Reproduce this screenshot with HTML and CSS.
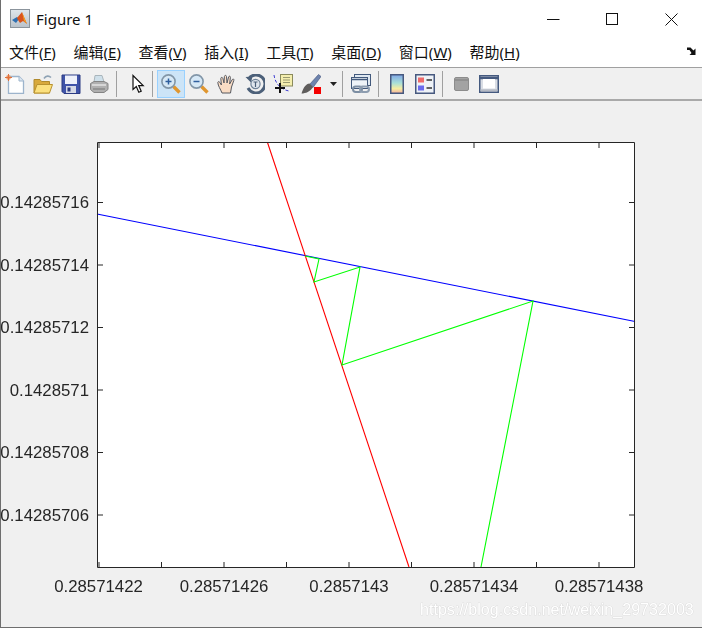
FILE: index.html
```html
<!DOCTYPE html>
<html lang="en">
<head>
    <meta charset="UTF-8">
    <meta name="viewport" content="width=device-width, initial-scale=1.0">
    <title>Figure 1</title>
    <link rel="stylesheet" href="styles.css">
</head>
<body>
    <div class="window">
        <div class="titlebar">
            <svg class="app-icon" width="20" height="20" viewBox="0 0 20 20">
                <defs>
                    <linearGradient id="frame" x1="0" y1="0" x2="0" y2="1">
                        <stop offset="0" stop-color="#dfe6ec"/>
                        <stop offset="1" stop-color="#b9c2ca"/>
                    </linearGradient>
                </defs>
                <rect x="0.5" y="0.5" width="19" height="18" fill="url(#frame)" stroke="#8b949c"/>
                <path d="M2 11 L7 8 L9 10 L6 14 Z" fill="#2f6fb0"/>
                <path d="M7 9 L12 3 L14 8 L17 15 L13 12 L10 14 L8 11 Z" fill="#d9541e"/>
                <path d="M12 3 L14 8 L17 15 L14 12 Z" fill="#f2a01f"/>
            </svg>
            <span class="title">Figure 1</span>
            <div class="window-controls">
                <svg width="13" height="13" viewBox="0 0 13 13"><path d="M0 6.5H12.5" stroke="#111" fill="none"/></svg>
                <svg width="13" height="13" viewBox="0 0 13 13"><rect x="0.5" y="0.5" width="11" height="11" stroke="#111" fill="none"/></svg>
                <svg width="13" height="13" viewBox="0 0 13 13"><path d="M0.5 0.5L12.5 12.5M12.5 0.5L0.5 12.5" stroke="#111" fill="none"/></svg>
            </div>
        </div>

        <div class="menubar">
            <span class="menu-item">文件(<u>F</u>)</span>
            <span class="menu-item">编辑(<u>E</u>)</span>
            <span class="menu-item">查看(<u>V</u>)</span>
            <span class="menu-item">插入(<u>I</u>)</span>
            <span class="menu-item">工具(<u>T</u>)</span>
            <span class="menu-item">桌面(<u>D</u>)</span>
            <span class="menu-item">窗口(<u>W</u>)</span>
            <span class="menu-item">帮助(<u>H</u>)</span>
            <svg class="dock-arrow" width="10" height="9" viewBox="0 0 10 9"><path d="M0 0.5H3.5L6.5 3.5L8.5 1.5V8H2.5L4.5 6L2.5 3H0Z" fill="#111"/></svg>
        </div>

        <div class="toolbar">
            <span class="tool"><svg width="20" height="20" viewBox="0 0 20 20">
                <path d="M3.5 2.5H14L18.5 7V19.5H3.5Z" fill="#fff" stroke="#9db4cc" stroke-width="1.3"/>
                <path d="M14 2.5V7H18.5" fill="#dce6f0" stroke="#9db4cc"/>
                <circle cx="3.5" cy="3.5" r="2.4" fill="#ee9a6a"/>
                <path d="M3.5 0V7M0 3.5H7" stroke="#e0703a"/>
            </svg></span>
            <span class="tool"><svg width="20" height="20" viewBox="0 0 20 20">
                <path d="M11 4.5C13 1.5 16 1.5 18 3.5" fill="none" stroke="#8fa3b5" stroke-width="1.6"/>
                <path d="M1 5.5H7L8.5 7.5H16.5V19H1Z" fill="#d8a93c" stroke="#b08a2d"/>
                <path d="M1 19L4 10.5H19.5L16.5 19Z" fill="#fbe07e" stroke="#b9922f"/>
            </svg></span>
            <span class="tool"><svg width="20" height="20" viewBox="0 0 20 20">
                <path d="M1 1H19V19.5H3L1 17.5Z" fill="#3f53a8" stroke="#2b3a82"/>
                <rect x="4" y="1.5" width="12" height="8.5" fill="#eef1fa"/>
                <rect x="5" y="12" width="10" height="7" fill="#d5d9e6"/>
                <rect x="6.5" y="13.5" width="3" height="4" fill="#2b3a82"/>
            </svg></span>
            <span class="tool"><svg width="20" height="20" viewBox="0 0 20 20">
                <path d="M6 1.5H13L15 8H5Z" fill="#cfe0ea" stroke="#a9b5bb"/>
                <path d="M1.5 9.5L5 7.5H15L19 9.5V15.5L15 18.5H5L1.5 15.5Z" fill="#b0b0b0" stroke="#858585"/>
                <path d="M3 11H17" stroke="#e4e4e4" stroke-width="1.5"/>
                <path d="M4 15H16" stroke="#777"/>
            </svg></span>
            <span class="sep sep-wide"></span>
            <span class="tool"><svg width="20" height="20" viewBox="0 0 20 20">
                <path d="M6 1.5V15.5L9.3 12.6L11.8 18.3L14.2 17.2L11.7 11.6H16.2Z" fill="#fff" stroke="#111" stroke-width="1.2"/>
            </svg></span>
            <span class="sep sep-tight"></span>
            <span class="tool tool-active"><svg width="20" height="20" viewBox="0 0 20 20">
                <path d="M12.5 12.5L18.5 18.5" stroke="#e0962f" stroke-width="3.4"/>
                <circle cx="7.5" cy="7.5" r="6.6" fill="#d6e8f6" stroke="#8296a8" stroke-width="1.6"/>
                <path d="M4.5 7.5H10.5M7.5 4.5V10.5" stroke="#2f5f9e" stroke-width="1.5"/>
            </svg></span>
            <span class="tool"><svg width="20" height="20" viewBox="0 0 20 20">
                <path d="M12.5 12.5L18.5 18.5" stroke="#e0962f" stroke-width="3.4"/>
                <circle cx="7.5" cy="7.5" r="6.6" fill="#d6e8f6" stroke="#8296a8" stroke-width="1.6"/>
                <path d="M4.5 7.5H10.5" stroke="#2f5f9e" stroke-width="1.5"/>
            </svg></span>
            <span class="tool"><svg width="20" height="20" viewBox="0 0 20 20">
                <path d="M5 19C3.5 15 1 12 0.8 8.5C1 7 2.5 7.5 3.2 9L4.4 11L3.8 4.5C3.9 3 5.5 3 5.9 4.5L7 9L7.4 2.5C7.7 1 9.3 1 9.5 2.5L10 9L11.6 3C12 1.7 13.6 2 13.4 3.5L12.6 10L15.3 5.5C16.2 4.5 17.3 5.2 16.8 6.5L14.5 13C14 15 14 17 13.5 19Z" fill="#f9dcc4" stroke="#56585f" stroke-width="1"/>
            </svg></span>
            <span class="tool"><svg width="20" height="20" viewBox="0 0 20 20">
                <path d="M3.5 5A9 9 0 1 1 3 14" fill="none" stroke="#4c6079" stroke-width="3"/>
                <path d="M0.5 3L7.5 2.5L6 8.5Z" fill="#4c6079"/>
                <circle cx="10.5" cy="10" r="4.6" fill="#dfe6ee" stroke="#6f8298" stroke-width="1.2"/>
                <path d="M8.5 8H12.5M10.5 8V13" stroke="#4c6079" stroke-width="1.2"/>
            </svg></span>
            <span class="tool"><svg width="20" height="20" viewBox="0 0 20 20">
                <path d="M1 1C2 8 6 15 16 17" fill="none" stroke="#3a3ad0" stroke-dasharray="3 2"/>
                <rect x="7.5" y="0.5" width="12" height="11.5" fill="#f4eeae" stroke="#8a8a5c"/>
                <path d="M10 3.5H17M10 6H17M10 8.5H17" stroke="#9a9a70"/>
                <path d="M7 9V19M2 14H12" stroke="#111" stroke-width="2"/>
            </svg></span>
            <span class="tool"><svg width="20" height="20" viewBox="0 0 20 20">
                <path d="M8.5 10.5L17.5 0.5L20 2.5L12 13.5Z" fill="#6d83ad" stroke="#3f4f78" stroke-width="0.6"/>
                <path d="M8.5 9.5C5 10 2.5 13 0.5 19.5C4.5 19.5 9.5 17.5 12 13Z" fill="#5f5d5c"/>
                <rect x="13" y="13" width="7" height="7" fill="#f40000"/>
            </svg></span>
            <span class="tool-caret"><svg width="7" height="4" viewBox="0 0 7 4"><path d="M0 0H7L3.5 4Z" fill="#222"/></svg></span>
            <span class="sep sep-tight"></span>
            <span class="tool"><svg width="20" height="20" viewBox="0 0 20 20">
                <rect x="3.5" y="0.5" width="16" height="11" fill="#dfe8f1" stroke="#42597c"/>
                <rect x="0.5" y="3.5" width="16" height="11" fill="#eef3f8" stroke="#42597c"/>
                <path d="M0.5 5.5H16.5" stroke="#42597c" stroke-width="1.5"/>
                <rect x="2" y="12.5" width="9" height="5.5" rx="2.7" fill="none" stroke="#7c8ea3" stroke-width="2"/>
                <rect x="9" y="12.5" width="9" height="5.5" rx="2.7" fill="none" stroke="#8d9db0" stroke-width="2"/>
            </svg></span>
            <span class="sep"></span>
            <span class="tool"><svg width="14" height="20" viewBox="0 0 14 20">
                <defs>
                    <linearGradient id="cbar" x1="0" y1="0" x2="0" y2="1">
                        <stop offset="0" stop-color="#7fa6e6"/>
                        <stop offset="0.45" stop-color="#a8e0d8"/>
                        <stop offset="0.75" stop-color="#f6eda0"/>
                        <stop offset="1" stop-color="#f4b0a0"/>
                    </linearGradient>
                </defs>
                <rect x="0.75" y="0.75" width="12.5" height="18.5" fill="url(#cbar)" stroke="#47597f" stroke-width="1.5"/>
            </svg></span>
            <span class="tool"><svg width="20" height="20" viewBox="0 0 20 20">
                <rect x="0.75" y="0.75" width="18.5" height="18.5" fill="#eef2f7" stroke="#47597f" stroke-width="1.5"/>
                <rect x="3" y="3.5" width="6" height="5" fill="#ee6a6a"/>
                <rect x="3" y="11.5" width="6" height="5" fill="#6a6aee"/>
                <path d="M11.5 6H17M11.5 14H17" stroke="#333" stroke-width="1.5"/>
            </svg></span>
            <span class="sep"></span>
            <span class="tool"><svg width="15" height="14" viewBox="0 0 15 14">
                <rect x="0.5" y="0.5" width="14" height="13" rx="1.5" fill="#a3a3a3" stroke="#8c8c8c"/>
                <path d="M1 3H14" stroke="#8a8a8a" stroke-width="1.5"/>
            </svg></span>
            <span class="tool"><svg width="20" height="18" viewBox="0 0 20 18">
                <rect x="0.75" y="0.75" width="18.5" height="16.5" fill="#d9dde4" stroke="#44597f" stroke-width="1.5"/>
                <path d="M1 3H19" stroke="#44597f" stroke-width="2.5"/>
                <rect x="4" y="4" width="12" height="9.5" fill="#fff"/>
                <path d="M1.5 15.3H18.5" stroke="#b5bac4" stroke-width="2"/>
            </svg></span>
        </div>

        <svg class="figure" width="702" height="527" viewBox="0 101 702 527">
            <rect x="97.5" y="142.5" width="537" height="425" fill="#fff"/>
            <g fill="none" stroke-width="1.1">
                <path d="M97 214L635 321.5" stroke="#0000ff"/>
                <path d="M267.5 142.5L409 567" stroke="#ff0000"/>
                <path d="M481 567L533 301L342 365L360 267L314 282L319 259L305 256" stroke="#00ff00"/>
            </g>
            <path class="axes-box" d="M97.5 567.5V142.5H634.5V567.5Z"/>
            <path class="axes-tick" d="M99 567v-5M161.5 567v-5M224 567v-5M286.5 567v-5M349 567v-5M411.5 567v-5M474 567v-5M536.5 567v-5M599 567v-5
                M99 143v5M161.5 143v5M224 143v5M286.5 143v5M349 143v5M411.5 143v5M474 143v5M536.5 143v5M599 143v5
                M98 202.5h5M98 265h5M98 327.5h5M98 390h5M98 452.5h5M98 515h5
                M634 202.5h-5M634 265h-5M634 327.5h-5M634 390h-5M634 452.5h-5M634 515h-5"/>
            <g class="tick-x">
                <text x="98.5" y="592">0.28571422</text>
                <text x="224" y="592">0.28571426</text>
                <text x="349" y="592">0.2857143</text>
                <text x="474" y="592">0.28571434</text>
                <text x="599" y="592">0.28571438</text>
            </g>
            <g class="tick-y">
                <text x="89" y="208">0.14285716</text>
                <text x="89" y="271">0.14285714</text>
                <text x="89" y="333">0.14285712</text>
                <text x="89" y="396">0.1428571</text>
                <text x="89" y="458">0.14285708</text>
                <text x="89" y="521">0.14285706</text>
            </g>
            <text class="watermark" x="420" y="615">https://blog.csdn.net/weixin_29732003</text>
        </svg>
    </div>
</body>
</html>
```

FILE: styles.css
```css
* {
    margin: 0;
    padding: 0;
    box-sizing: border-box;
}

body {
    background: #f0f0f0;
    font-family: "Noto Sans", "Noto Sans CJK SC", sans-serif;
    color: #111;
    overflow: hidden;
}

.window {
    width: 702px;
    height: 628px;
    border-left: 1px solid #6e6e6e;
    border-bottom: 1px solid #6e6e6e;
    display: flex;
    flex-direction: column;
    overflow: hidden;
}

.titlebar {
    height: 36px;
    background: #fff;
    display: flex;
    align-items: center;
    padding: 2px 0 0 9px;
    flex-shrink: 0;
}

.app-icon {
    margin-right: 6px;
}

.title {
    font-size: 15px;
}

.window-controls {
    margin-left: auto;
    margin-right: 24px;
    display: flex;
    gap: 46px;
}

.menubar {
    height: 32px;
    background: #fff;
    display: flex;
    align-items: center;
    gap: 17.7px;
    padding: 0 0 0 8px;
    font-size: 15px;
    line-height: 20px;
    border-bottom: 1px solid #a0a0a0;
    flex-shrink: 0;
}

.dock-arrow {
    margin-left: auto;
    margin-right: 5px;
}

.toolbar {
    height: 33px;
    background: #f0f0f0;
    display: flex;
    align-items: center;
    border-bottom: 2px solid #a9a9a9;
    flex-shrink: 0;
}

.tool {
    width: 28px;
    height: 28px;
    display: flex;
    align-items: center;
    justify-content: center;
}

.tool svg,
.tool-caret svg,
.app-icon {
    filter: blur(0.3px);
}

.tool-active {
    background: #cce4f7;
    border: 1px solid #99d1ff;
}

.tool-caret {
    width: 16px;
    display: flex;
    justify-content: center;
    padding-left: 1px;
}

.sep {
    width: 1px;
    height: 26px;
    background: #a0a0a0;
    margin: 0 4px 0 3px;
}

.sep-wide {
    margin-right: 6px;
}

.sep-tight {
    margin-left: 1px;
}

.figure {
    display: block;
    flex-shrink: 0;
    margin-left: -1px;
    filter: blur(0.25px);
}

.axes-box,
.axes-tick {
    fill: none;
    stroke: #262626;
    stroke-width: 1;
}

.tick-x text,
.tick-y text {
    font-family: "Liberation Sans", sans-serif;
    font-size: 16.8px;
    fill: #262626;
}

.tick-x text {
    text-anchor: middle;
}

.tick-y text {
    text-anchor: end;
}

.watermark {
    font-family: "Liberation Sans", sans-serif;
    font-size: 16.1px;
    fill: #fff;
    stroke: #d4d4d4;
    stroke-width: 0.7;
    paint-order: stroke;
}
```
